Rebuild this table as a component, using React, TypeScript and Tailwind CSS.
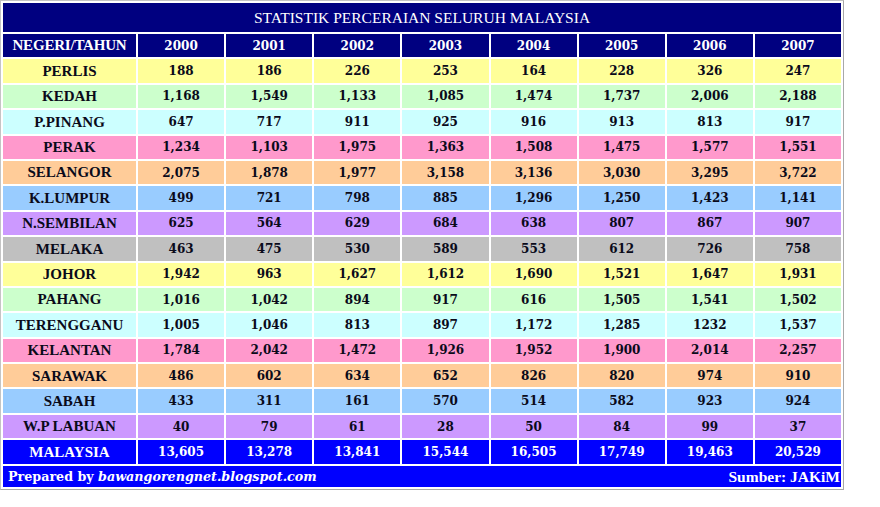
import React from "react";

const rows: { name: string; bg: string; v: string[] }[] = [
  { name: "PERLIS", bg: "bg-[#ffff99]", v: ["188", "186", "226", "253", "164", "228", "326", "247"] },
  { name: "KEDAH", bg: "bg-[#ccffcc]", v: ["1,168", "1,549", "1,133", "1,085", "1,474", "1,737", "2,006", "2,188"] },
  { name: "P.PINANG", bg: "bg-[#ccffff]", v: ["647", "717", "911", "925", "916", "913", "813", "917"] },
  { name: "PERAK", bg: "bg-[#ff99cc]", v: ["1,234", "1,103", "1,975", "1,363", "1,508", "1,475", "1,577", "1,551"] },
  { name: "SELANGOR", bg: "bg-[#ffcc99]", v: ["2,075", "1,878", "1,977", "3,158", "3,136", "3,030", "3,295", "3,722"] },
  { name: "K.LUMPUR", bg: "bg-[#99ccff]", v: ["499", "721", "798", "885", "1,296", "1,250", "1,423", "1,141"] },
  { name: "N.SEMBILAN", bg: "bg-[#cc99ff]", v: ["625", "564", "629", "684", "638", "807", "867", "907"] },
  { name: "MELAKA", bg: "bg-[#c0c0c0]", v: ["463", "475", "530", "589", "553", "612", "726", "758"] },
  { name: "JOHOR", bg: "bg-[#ffff99]", v: ["1,942", "963", "1,627", "1,612", "1,690", "1,521", "1,647", "1,931"] },
  { name: "PAHANG", bg: "bg-[#ccffcc]", v: ["1,016", "1,042", "894", "917", "616", "1,505", "1,541", "1,502"] },
  { name: "TERENGGANU", bg: "bg-[#ccffff]", v: ["1,005", "1,046", "813", "897", "1,172", "1,285", "1232", "1,537"] },
  { name: "KELANTAN", bg: "bg-[#ff99cc]", v: ["1,784", "2,042", "1,472", "1,926", "1,952", "1,900", "2,014", "2,257"] },
  { name: "SARAWAK", bg: "bg-[#ffcc99]", v: ["486", "602", "634", "652", "826", "820", "974", "910"] },
  { name: "SABAH", bg: "bg-[#99ccff]", v: ["433", "311", "161", "570", "514", "582", "923", "924"] },
  { name: "W.P LABUAN", bg: "bg-[#cc99ff]", v: ["40", "79", "61", "28", "50", "84", "99", "37"] },
];

const years = ["2000", "2001", "2002", "2003", "2004", "2005", "2006", "2007"];
const totals = ["13,605", "13,278", "13,841", "15,544", "16,505", "17,749", "19,463", "20,529"];

const nameFont = "font-['Liberation_Serif',serif] font-bold text-[15px]";
const numFont = "font-['DejaVu_Serif',serif] font-bold text-[12px]";

export default function App() {
  return (
    <div className="w-[880px] h-[507px] bg-white">
      <div className="w-[844px] border border-[#c4c4c4] border-r-[#a8a8a8] border-b-[#a8a8a8] bg-white p-[2px] grid grid-cols-[133px_repeat(8,minmax(0,1fr))] gap-[2px]">
        <div className="col-span-9 h-[29px] bg-[#000080] text-white flex items-center justify-center font-['Liberation_Serif',serif] text-[15.5px]">
          STATISTIK PERCERAIAN SELURUH MALAYSIA
        </div>

        <div className="h-[23.4px] bg-[#000080] text-white flex items-center justify-center font-['Liberation_Serif',serif] font-bold text-[15px] tracking-[-0.2px]">
          NEGERI/TAHUN
        </div>
        {years.map((y) => (
          <div key={y} className={`h-[23.4px] bg-[#000080] text-white flex items-center justify-center ${numFont}`}>
            {y}
          </div>
        ))}

        {rows.map((r) => (
          <React.Fragment key={r.name}>
            <div className={`h-[23.4px] ${r.bg} text-[#0a0a1a] flex items-center justify-center ${nameFont}`}>
              {r.name}
            </div>
            {r.v.map((n, i) => (
              <div key={i} className={`h-[23.4px] ${r.bg} text-[#0a0a1a] flex items-center justify-center ${numFont}`}>
                {n}
              </div>
            ))}
          </React.Fragment>
        ))}

        <div className={`h-[23.4px] bg-[#0000ff] text-white flex items-center justify-center ${nameFont}`}>
          MALAYSIA
        </div>
        {totals.map((n, i) => (
          <div key={i} className={`h-[23.4px] bg-[#0000ff] text-white flex items-center justify-center ${numFont}`}>
            {n}
          </div>
        ))}

        <div className="col-span-9 h-[21px] bg-[#0000ff] text-white flex items-center justify-between pl-[5px] pr-[1px]">
          <span className="font-['DejaVu_Serif',serif] font-bold text-[12.7px]">
            Prepared by <span className="italic">bawangorengnet.blogspot.com</span>
          </span>
          <span className="font-['Liberation_Serif',serif] font-bold text-[15.5px]">Sumber: JAKiM</span>
        </div>
      </div>
    </div>
  );
}
